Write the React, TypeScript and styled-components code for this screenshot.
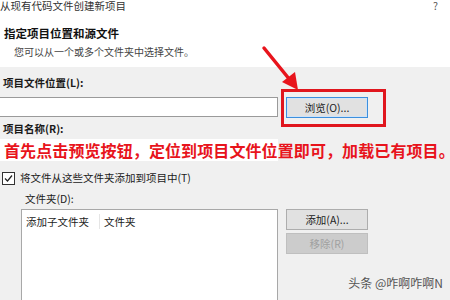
import styled, { createGlobalStyle } from "styled-components";

const GlobalStyle = createGlobalStyle`
  html, body {
    margin: 0;
    padding: 0;
    background: #f0f0f0;
  }
  body {
    font-family: "Noto Sans CJK SC", "Noto Sans", sans-serif;
    color: #1a1a1a;
  }
`;

const Dialog = styled.div`
  position: relative;
  width: 450px;
  height: 300px;
  overflow: hidden;
  background: #f0f0f0;
`;

const Header = styled.div`
  height: 67px;
  background: #ffffff;
  box-sizing: border-box;
`;

const TitleRow = styled.div`
  display: flex;
  justify-content: space-between;
  height: 10px;
  font-size: 10.5px;
  line-height: 11px;
  color: #333;
`;

const Help = styled.span`
  margin-right: 12px;
  color: #555;
`;

const SectionTitle = styled.div`
  margin-top: 15px;
  padding-left: 4px;
  font-size: 11.5px;
  font-weight: bold;
  line-height: 16px;
  color: #111;
`;

const SectionDesc = styled.div`
  margin-top: 4px;
  padding-left: 14px;
  font-size: 10px;
  line-height: 14px;
  color: #444;
`;

const Body = styled.div`
  padding-top: 8px;
`;

const Label = styled.div<{ $indent?: number; $bold?: boolean; $top?: number }>`
  margin-top: ${(p) => p.$top ?? 0}px;
  padding-left: ${(p) => p.$indent ?? 3}px;
  font-size: 10.5px;
  line-height: 16px;
  font-weight: ${(p) => (p.$bold ? "bold" : "normal")};
  color: #1a1a1a;
`;

const Row = styled.div<{ $top?: number }>`
  display: flex;
  align-items: flex-start;
  gap: 8px;
  margin-top: ${(p) => p.$top ?? 0}px;
`;

const TextBox = styled.div<{ $plain?: boolean }>`
  width: 278px;
  height: ${(p) => (p.$plain ? 22 : 20)}px;
  box-sizing: border-box;
  background: #fff;
  border: 1px solid ${(p) => (p.$plain ? "#fff" : "#9a9a9a")};
  border-left: none;
`;

const ButtonBox = styled.div`
  position: relative;
`;

const Button = styled.div<{ $focus?: boolean; $disabled?: boolean }>`
  width: 82px;
  height: 21px;
  box-sizing: border-box;
  display: flex;
  align-items: center;
  justify-content: center;
  font-size: 10.5px;
  color: ${(p) => (p.$disabled ? "#a0a0a0" : "#222")};
  background: ${(p) => (p.$disabled ? "#cccccc" : "#e1e1e1")};
  border: 1px solid
    ${(p) => (p.$focus ? "#3c8fdd" : p.$disabled ? "#bfbfbf" : "#adadad")};
  box-shadow: ${(p) => (p.$focus ? "inset 0 0 0 1px #cfe3f7" : "none")};
`;

const RedFrame = styled.div`
  position: absolute;
  left: -5px;
  top: -8px;
  width: 105px;
  height: 38px;
  box-sizing: border-box;
  border: 3px solid #e0161e;
`;

const Arrow = styled.svg`
  position: absolute;
  left: 258px;
  top: 44px;
`;

const NameArea = styled.div`
  position: relative;
  margin-top: 2px;
  height: 22px;
`;

const Annotation = styled.div`
  position: absolute;
  left: 4px;
  top: 0;
  white-space: nowrap;
  font-size: 16px;
  font-weight: bold;
  line-height: 22px;
  color: #e8141c;
  letter-spacing: 0.1px;
`;

const CheckRow = styled.div`
  display: flex;
  align-items: center;
  gap: 5px;
  margin-top: 9px;
  padding-left: 2px;
  font-size: 10.5px;
  line-height: 16px;
`;

const CheckBox = styled.div`
  width: 11px;
  height: 11px;
  border: 1px solid #333;
  background: #fff;
  display: flex;
  align-items: center;
  justify-content: center;
`;

const ListBox = styled.div`
  margin-left: 21px;
  width: 257px;
  height: 100px;
  box-sizing: border-box;
  background: #fff;
  border: 1px solid #a8a8a8;
`;

const ListHeader = styled.div`
  display: flex;
  height: 22px;
  align-items: center;
  font-size: 10.5px;
  color: #1a1a1a;
  white-space: nowrap;
`;

const HeaderCell = styled.div<{ $w?: number }>`
  width: ${(p) => (p.$w ? `${p.$w}px` : "auto")};
  padding-left: 4px;
  box-sizing: border-box;
  border-right: ${(p) => (p.$w ? "1px solid #e5e5e5" : "none")};
`;

const ButtonColumn = styled.div`
  display: flex;
  flex-direction: column;
  gap: 3px;
`;

const Watermark = styled.div`
  position: absolute;
  right: 7px;
  bottom: 9px;
  font-size: 12px;
  color: #555;
`;

export default function App() {
  return (
    <>
      <GlobalStyle />
      <Dialog>
        <Header>
          <TitleRow>
            <span>从现有代码文件创建新项目</span>
            <Help>?</Help>
          </TitleRow>
          <SectionTitle>指定项目位置和源文件</SectionTitle>
          <SectionDesc>您可以从一个或多个文件夹中选择文件。</SectionDesc>
        </Header>
        <Body>
          <Label $bold>项目文件位置(L):</Label>
          <Row $top={6}>
            <TextBox />
            <ButtonBox>
              <Button $focus>浏览(O)...</Button>
              <RedFrame />
            </ButtonBox>
          </Row>
          <Label $bold $top={3}>
            项目名称(R):
          </Label>
          <NameArea>
            <TextBox $plain />
            <Annotation>首先点击预览按钮，定位到项目文件位置即可，加载已有项目。</Annotation>
          </NameArea>
          <CheckRow>
            <CheckBox>
              <svg width="9" height="9" viewBox="0 0 9 9">
                <path d="M1 4.5 L3.5 7 L8 1.5" fill="none" stroke="#222" strokeWidth="1.2" />
              </svg>
            </CheckBox>
            <span>将文件从这些文件夹添加到项目中(T)</span>
          </CheckRow>
          <Label $indent={25} $top={5}>
            文件夹(D):
          </Label>
          <Row $top={2}>
            <ListBox>
              <ListHeader>
                <HeaderCell $w={78}>添加子文件夹</HeaderCell>
                <HeaderCell>文件夹</HeaderCell>
              </ListHeader>
            </ListBox>
            <ButtonColumn>
              <Button>添加(A)...</Button>
              <Button $disabled>移除(R)</Button>
            </ButtonColumn>
          </Row>
        </Body>
        <Arrow width="50" height="50" viewBox="0 0 50 50">
          <path d="M6 4 L32 36" stroke="#e8141c" strokeWidth="3.5" strokeLinecap="round" />
          <path d="M40 46 L24 38 L37 28 Z" fill="#e8141c" />
        </Arrow>
        <Watermark>头条 @咋啊咋啊N</Watermark>
      </Dialog>
    </>
  );
}
